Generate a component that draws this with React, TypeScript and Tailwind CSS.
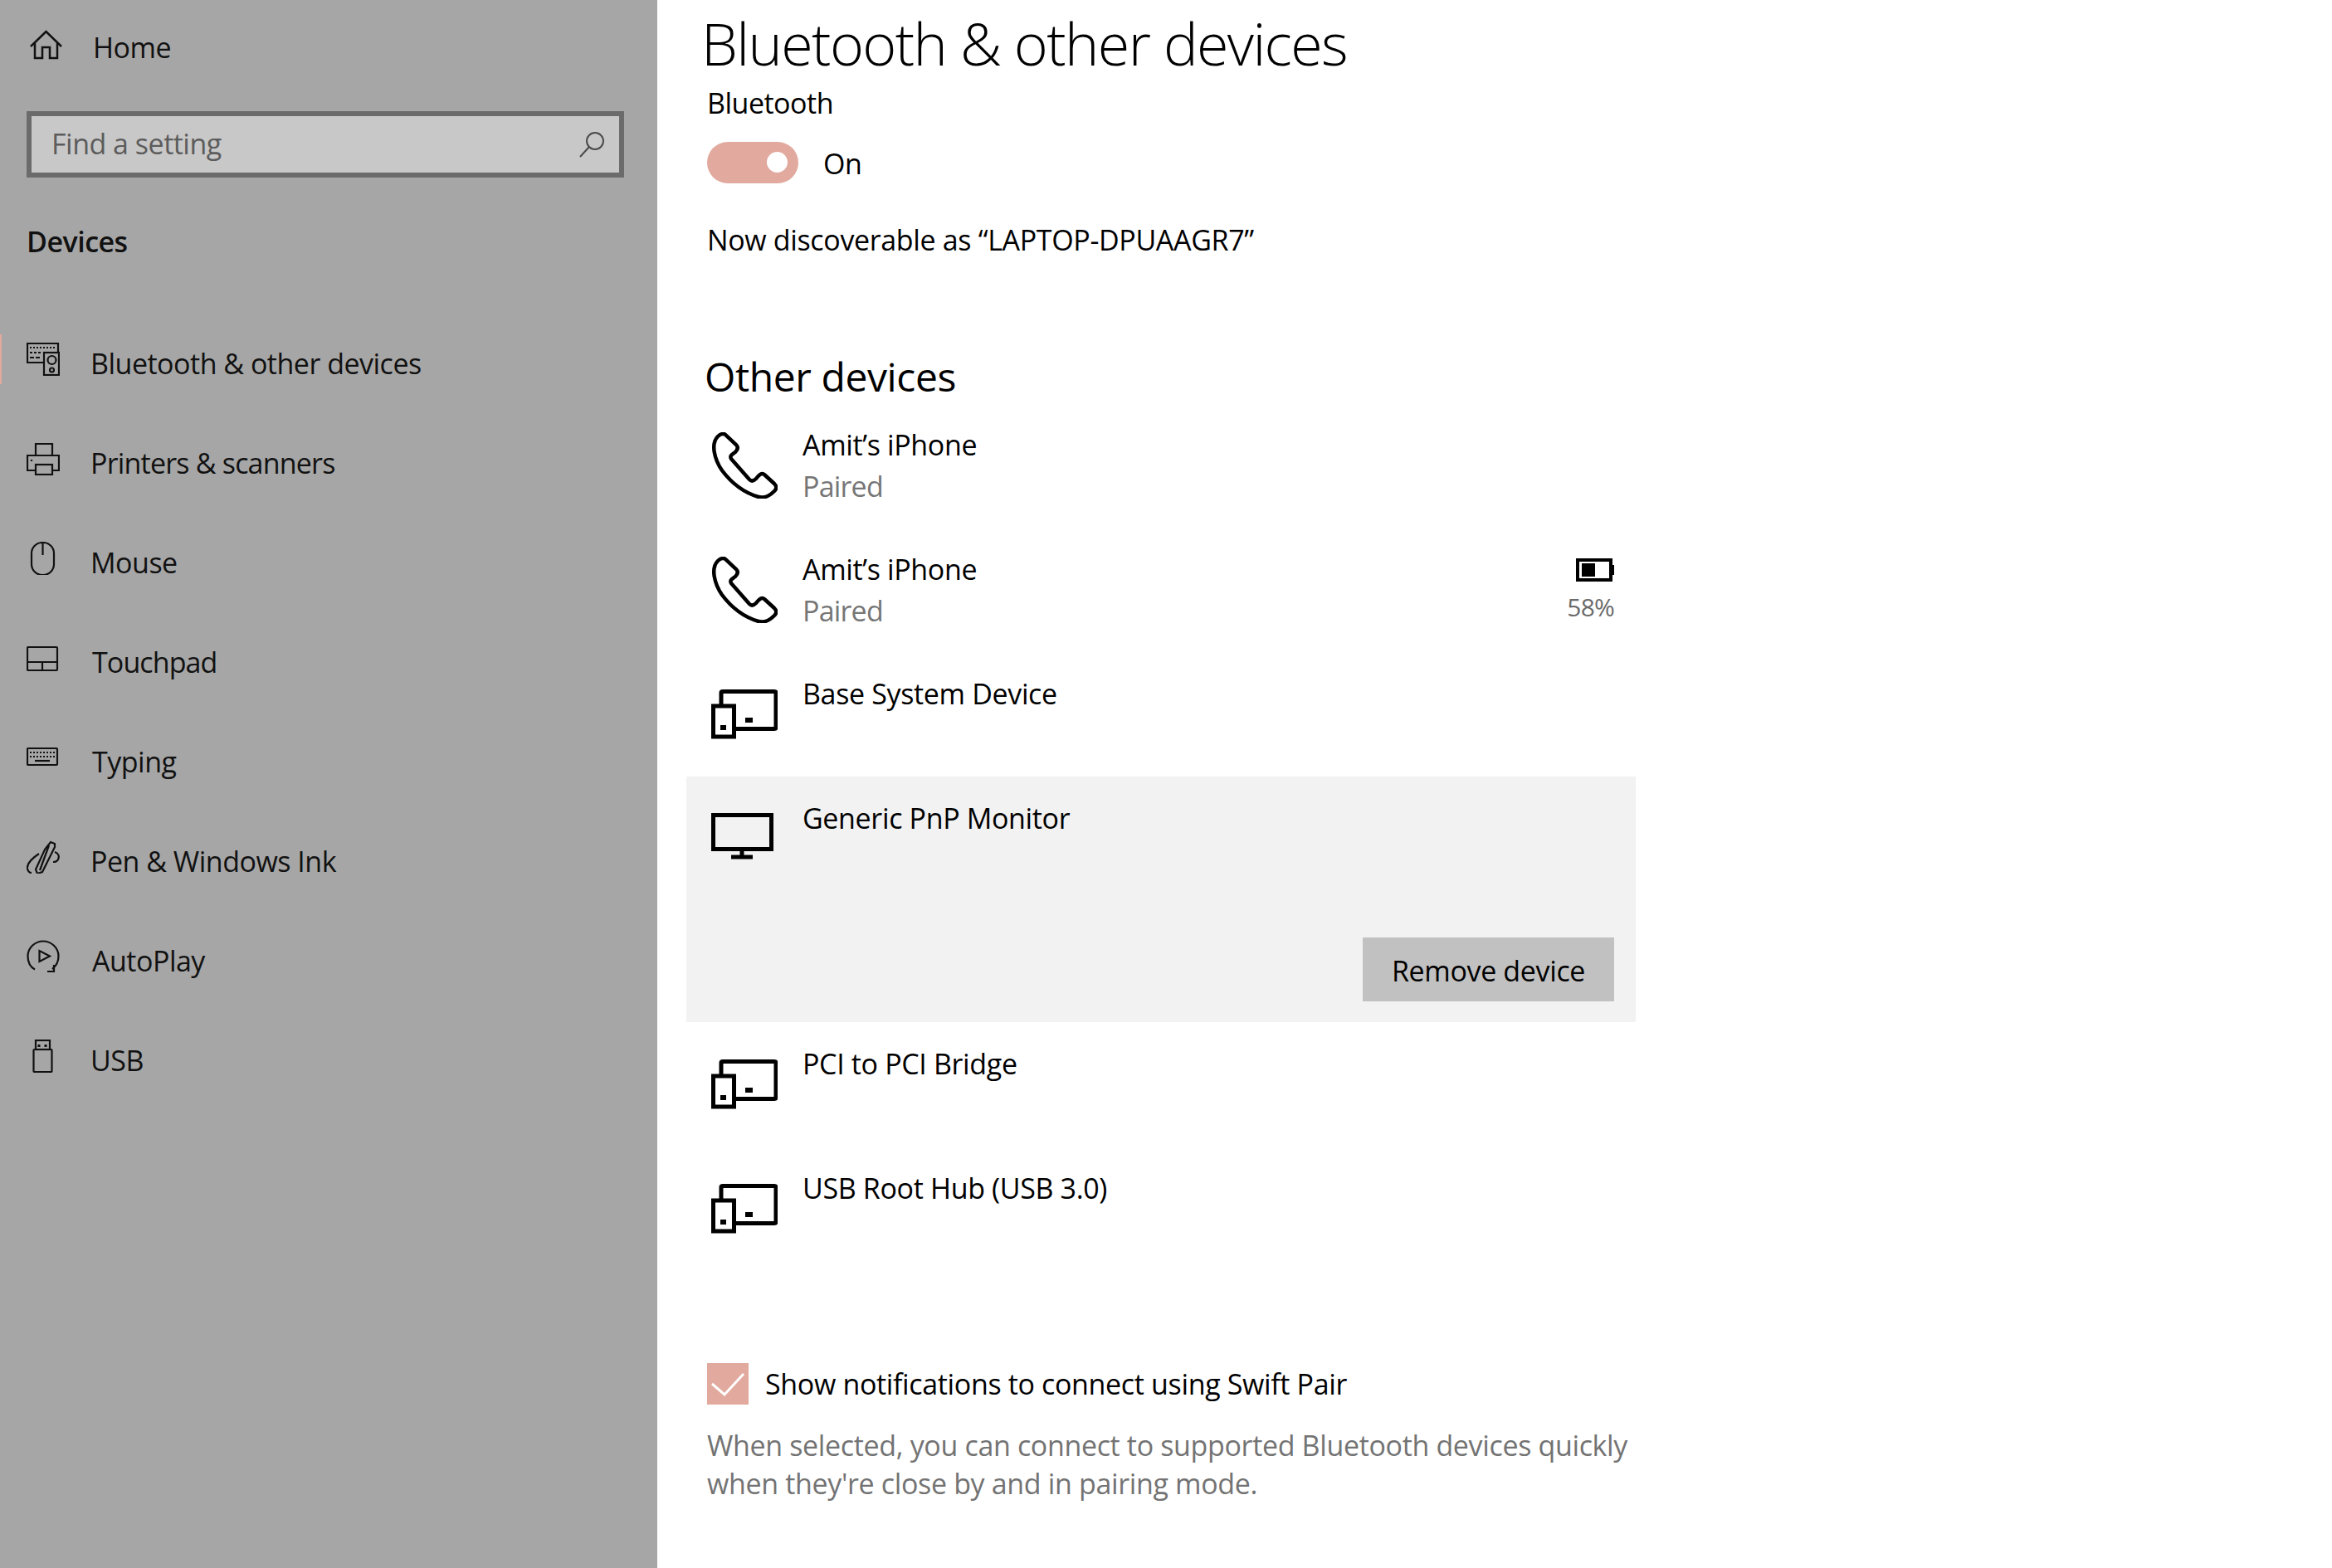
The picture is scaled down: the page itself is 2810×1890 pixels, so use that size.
import React from "react";

const font = "[font-family:'Open_Sans','Noto_Sans',sans-serif]";

function Icon({ children }: { children: React.ReactNode }) {
  return (
    <svg width="40" height="40" viewBox="0 0 40 40" fill="none" stroke="#111" strokeWidth="2.200" className="shrink-0 -mt-[11px]">
      {children}
    </svg>
  );
}

const navItems: { label: string; textClass: string; icon: React.ReactNode }[] = [
  {
    label: "Bluetooth & other devices",
    textClass: "ml-[37px]",
    icon: (
      <>
        <path d="M20 24H1V1H38V11" />
        <path d="M4 6H35" strokeDasharray="2 2" />
        <path d="M4 12H18" strokeDasharray="3 2" />
        <path d="M4 18H18" strokeDasharray="5 2" />
        <rect x="21" y="12" width="18" height="27" />
        <circle cx="30.500" cy="21" r="5" />
        <circle cx="30.500" cy="33" r="2.500" />
      </>
    ),
  },
  {
    label: "Printers & scanners",
    textClass: "ml-[37px] tracking-[-0.8px]",
    icon: (
      <>
        <path d="M11 15V2H31V15" />
        <path d="M11 34H1V16H39V34H31" />
        <rect x="11" y="27" width="20" height="12" />
        <path d="M6 21V23" />
      </>
    ),
  },
  {
    label: "Mouse",
    textClass: "ml-[37px]",
    icon: (
      <>
        <rect x="6" y="1" width="27" height="39" rx="13" />
        <path d="M19.500 1V16" />
      </>
    ),
  },
  {
    label: "Touchpad",
    textClass: "ml-[39px] tracking-[-0.9px]",
    icon: (
      <>
        <rect x="1" y="7" width="36" height="28" rx="1" />
        <path d="M1 25H37M19 25V35" />
      </>
    ),
  },
  {
    label: "Typing",
    textClass: "ml-[39px]",
    icon: (
      <>
        <rect x="1" y="9" width="36" height="20" rx="1" />
        <path d="M4 14H34M4 19H34" strokeDasharray="2 2" />
        <path d="M10 24H28" />
      </>
    ),
  },
  {
    label: "Pen & Windows Ink",
    textClass: "ml-[37px]",
    icon: (
      <>
        <path d="M22 11L29 2L34 4L34 8L19 38L13 40L11 35Z" />
        <path d="M27 6L16 36" />
        <path d="M15 16C6 22 0 28 1 34C2 38 4 39 6 39" />
        <path d="M34 14C38 15 40 19 38 23C37 25 34 26 32 26" />
      </>
    ),
  },
  {
    label: "AutoPlay",
    textClass: "ml-[39px]",
    icon: (
      <>
        <path d="M10 35.500C4.500 32.500 1.500 26 1.500 19.500C1.500 9.500 10 1.500 20 1.500C30 1.500 38.500 9.500 38.500 19.500C38.500 25.500 36 31 31 35" />
        <path d="M15.500 13V26L28 19.500Z" />
        <path d="M33 30V38H25" />
      </>
    ),
  },
  {
    label: "USB",
    textClass: "ml-[37px]",
    icon: (
      <>
        <rect x="11" y="1" width="17" height="11" />
        <rect x="8.500" y="12" width="22" height="27" rx="1" />
        <path d="M15 6V9M23 6V9" strokeWidth="3" />
      </>
    ),
  },
];

function Phone() {
  return (
    <svg width="80" height="80" viewBox="0 0 80 80" fill="none" stroke="#000" strokeWidth="4.500" className="shrink-0">
      <path d="M8 5C11 2 15 1 17 3L30 15C33 18 32 21 29 24C25 27 22 28 24 32L46 57C49 60 52 58 54 56C57 52 61 48 64 51L76 62C79 65 79 68 76 71C70 77 64 80 57 78C40 73 25 62 13 46C4 33 -1 14 8 5Z" />
    </svg>
  );
}

function Generic() {
  return (
    <svg width="80" height="60" viewBox="0 0 80 60" fill="none" stroke="#000" strokeWidth="5" className="shrink-0 mt-[45px]">
      <path d="M12 18V4C12 3 12.500 2.500 14 2.500H76C77 2.500 78 3 78 4V46C78 47 77 47.500 76 47.500H30" />
      <rect x="2.500" y="20" width="25" height="37" />
      <rect x="11" y="43" width="7" height="6" fill="#000" stroke="none" />
      <rect x="41" y="34" width="9" height="6" fill="#000" stroke="none" />
    </svg>
  );
}

function Monitor() {
  return (
    <svg width="80" height="56" viewBox="0 0 80 56" fill="none" stroke="#000" strokeWidth="5" className="shrink-0 mt-[44px]">
      <rect x="2.500" y="2.500" width="70" height="41" />
      <path d="M37 45V52M24 53H50" />
    </svg>
  );
}

function Row({
  icon,
  name,
  sub,
  right,
}: {
  icon: React.ReactNode;
  name: string;
  sub?: string;
  right?: React.ReactNode;
}) {
  return (
    <div className="flex h-[150px] pl-[30px] pr-[26px]">
      <div className="w-[110px] shrink-0">{icon}</div>
      <div className="flex-1 pt-[25px]">
        <div className="h-[50px] leading-[50px] text-black">{name}</div>
        {sub && <div className="h-[50px] leading-[50px] tracking-[-0.8px] text-[#767676]">{sub}</div>}
      </div>
      {right}
    </div>
  );
}

export default function App() {
  return (
    <div className={`flex h-[1890px] w-[2810px] overflow-hidden bg-white text-[34px] ${font}`}>
      <aside className="flex w-[792px] shrink-0 flex-col bg-[#a6a6a6] tracking-[-0.5px] text-[#111]">
        <div className="flex h-[112px] items-center pl-[36px] pt-[2px]">
          <svg width="40" height="40" viewBox="0 0 40 40" fill="none" stroke="#111" strokeWidth="2.500" className="shrink-0 -mt-[6px]">
            <path d="M1 22L19.500 4L38 22" />
            <path d="M6 18V36H15V23H24V36H33V18" />
          </svg>
          <span className="ml-[36px]">Home</span>
        </div>
        <div className="ml-[32px] mr-[40px] mt-[22px] flex h-[80px] items-center justify-between border-[6px] border-[#6b6b6b] bg-[#c8c8c8] pl-[24px] pr-[16px] text-[#5c5c5c]">
          <span className="-mt-[2px]">Find a setting</span>
          <svg width="32" height="32" viewBox="0 0 32 32" fill="none" stroke="#4a4a4a" strokeWidth="2" className="shrink-0">
            <circle cx="19" cy="12" r="10" />
            <path d="M12 19L1 31" />
          </svg>
        </div>
        <div className="ml-[32px] mt-[52px] h-[50px] font-semibold leading-[50px]">Devices</div>
        <nav className="relative mt-[62px] flex flex-col">
          <div className="absolute left-0 top-[25px] h-[60px] w-[2px] bg-[#e2a99e]" />
          {navItems.map((item) => (
            <div key={item.label} className="flex h-[120px] items-center pl-[32px]">
              <Icon>{item.icon}</Icon>
              <span className={item.textClass}>{item.label}</span>
            </div>
          ))}
        </nav>
      </aside>

      <main className="flex flex-1 flex-col pl-[35px] tracking-[-0.35px] text-black">
        <h1 className="ml-[18px] mt-[4px] h-[96px] text-[70px] font-light leading-[96px] tracking-[-1.6px]">
          Bluetooth &amp; other devices
        </h1>
        <div className="ml-[25px] -mt-[1px] h-[50px] leading-[50px] tracking-[-0.5px]">Bluetooth</div>
        <div className="ml-[25px] mt-[19px] flex items-center">
          <div className="flex h-[50px] w-[110px] items-center justify-end rounded-full bg-[#e2a99e] pr-[13px]">
            <div className="h-[25px] w-[25px] rounded-full bg-white" />
          </div>
          <span className="ml-[30px] mt-[4px]">On</span>
        </div>
        <div className="ml-[25px] mt-[41px] h-[50px] leading-[50px]">Now discoverable as “LAPTOP-DPUAAGR7”</div>
        <h2 className="ml-[22px] mt-[108px] h-[64px] text-[48px] font-normal leading-[64px] tracking-[-0.4px]">Other devices</h2>
        <div className="w-[1144px]">
          <Row icon={<div className="mt-[35px]"><Phone /></div>} name="Amit’s iPhone" sub="Paired" />
          <Row
            icon={<div className="mt-[35px]"><Phone /></div>}
            name="Amit’s iPhone"
            sub="Paired"
            right={
              <div className="flex flex-col items-end pt-[37px]">
                <svg width="46" height="28" viewBox="0 0 46 28" fill="none" className="shrink-0">
                  <rect x="2" y="2" width="40" height="24" stroke="#000" strokeWidth="4" />
                  <rect x="7" y="6" width="16" height="16" fill="#000" />
                  <rect x="43" y="8" width="3" height="12" fill="#000" />
                </svg>
                <span className="mt-[9px] text-[30px] leading-[44px] tracking-[-0.8px] text-[#6b6b6b]">58%</span>
              </div>
            }
          />
          <Row icon={<Generic />} name="Base System Device" />
          <div className="flex h-[296px] flex-col bg-[#f2f2f2] pl-[30px] pr-[26px]">
            <div className="flex">
              <div className="w-[110px] shrink-0">
                <Monitor />
              </div>
              <div className="h-[50px] pt-[25px] leading-[50px]">Generic PnP Monitor</div>
            </div>
            <div className="mt-auto mb-[25px] flex justify-end">
              <div className="flex h-[77px] w-[303px] items-center justify-center bg-[#c1c1c1] pt-[3px]">Remove device</div>
            </div>
          </div>
          <Row icon={<Generic />} name="PCI to PCI Bridge" />
          <Row icon={<Generic />} name="USB Root Hub (USB 3.0)" />
        </div>
        <div className="ml-[25px] mt-[111px] flex h-[50px] items-center">
          <div className="flex h-[50px] w-[50px] shrink-0 items-center justify-center bg-[#e2a99e]">
            <svg width="50" height="50" viewBox="0 0 50 50" fill="none" stroke="#fff" strokeWidth="3">
              <path d="M6 25L21 38L44 13" />
            </svg>
          </div>
          <span className="ml-[20px]">Show notifications to connect using Swift Pair</span>
        </div>
        <div className="ml-[25px] mt-[26px] w-[1125px] leading-[46px] text-[#737373]">
          When selected, you can connect to supported Bluetooth devices quickly
          <br />
          when they're close by and in pairing mode.
        </div>
      </main>
    </div>
  );
}
